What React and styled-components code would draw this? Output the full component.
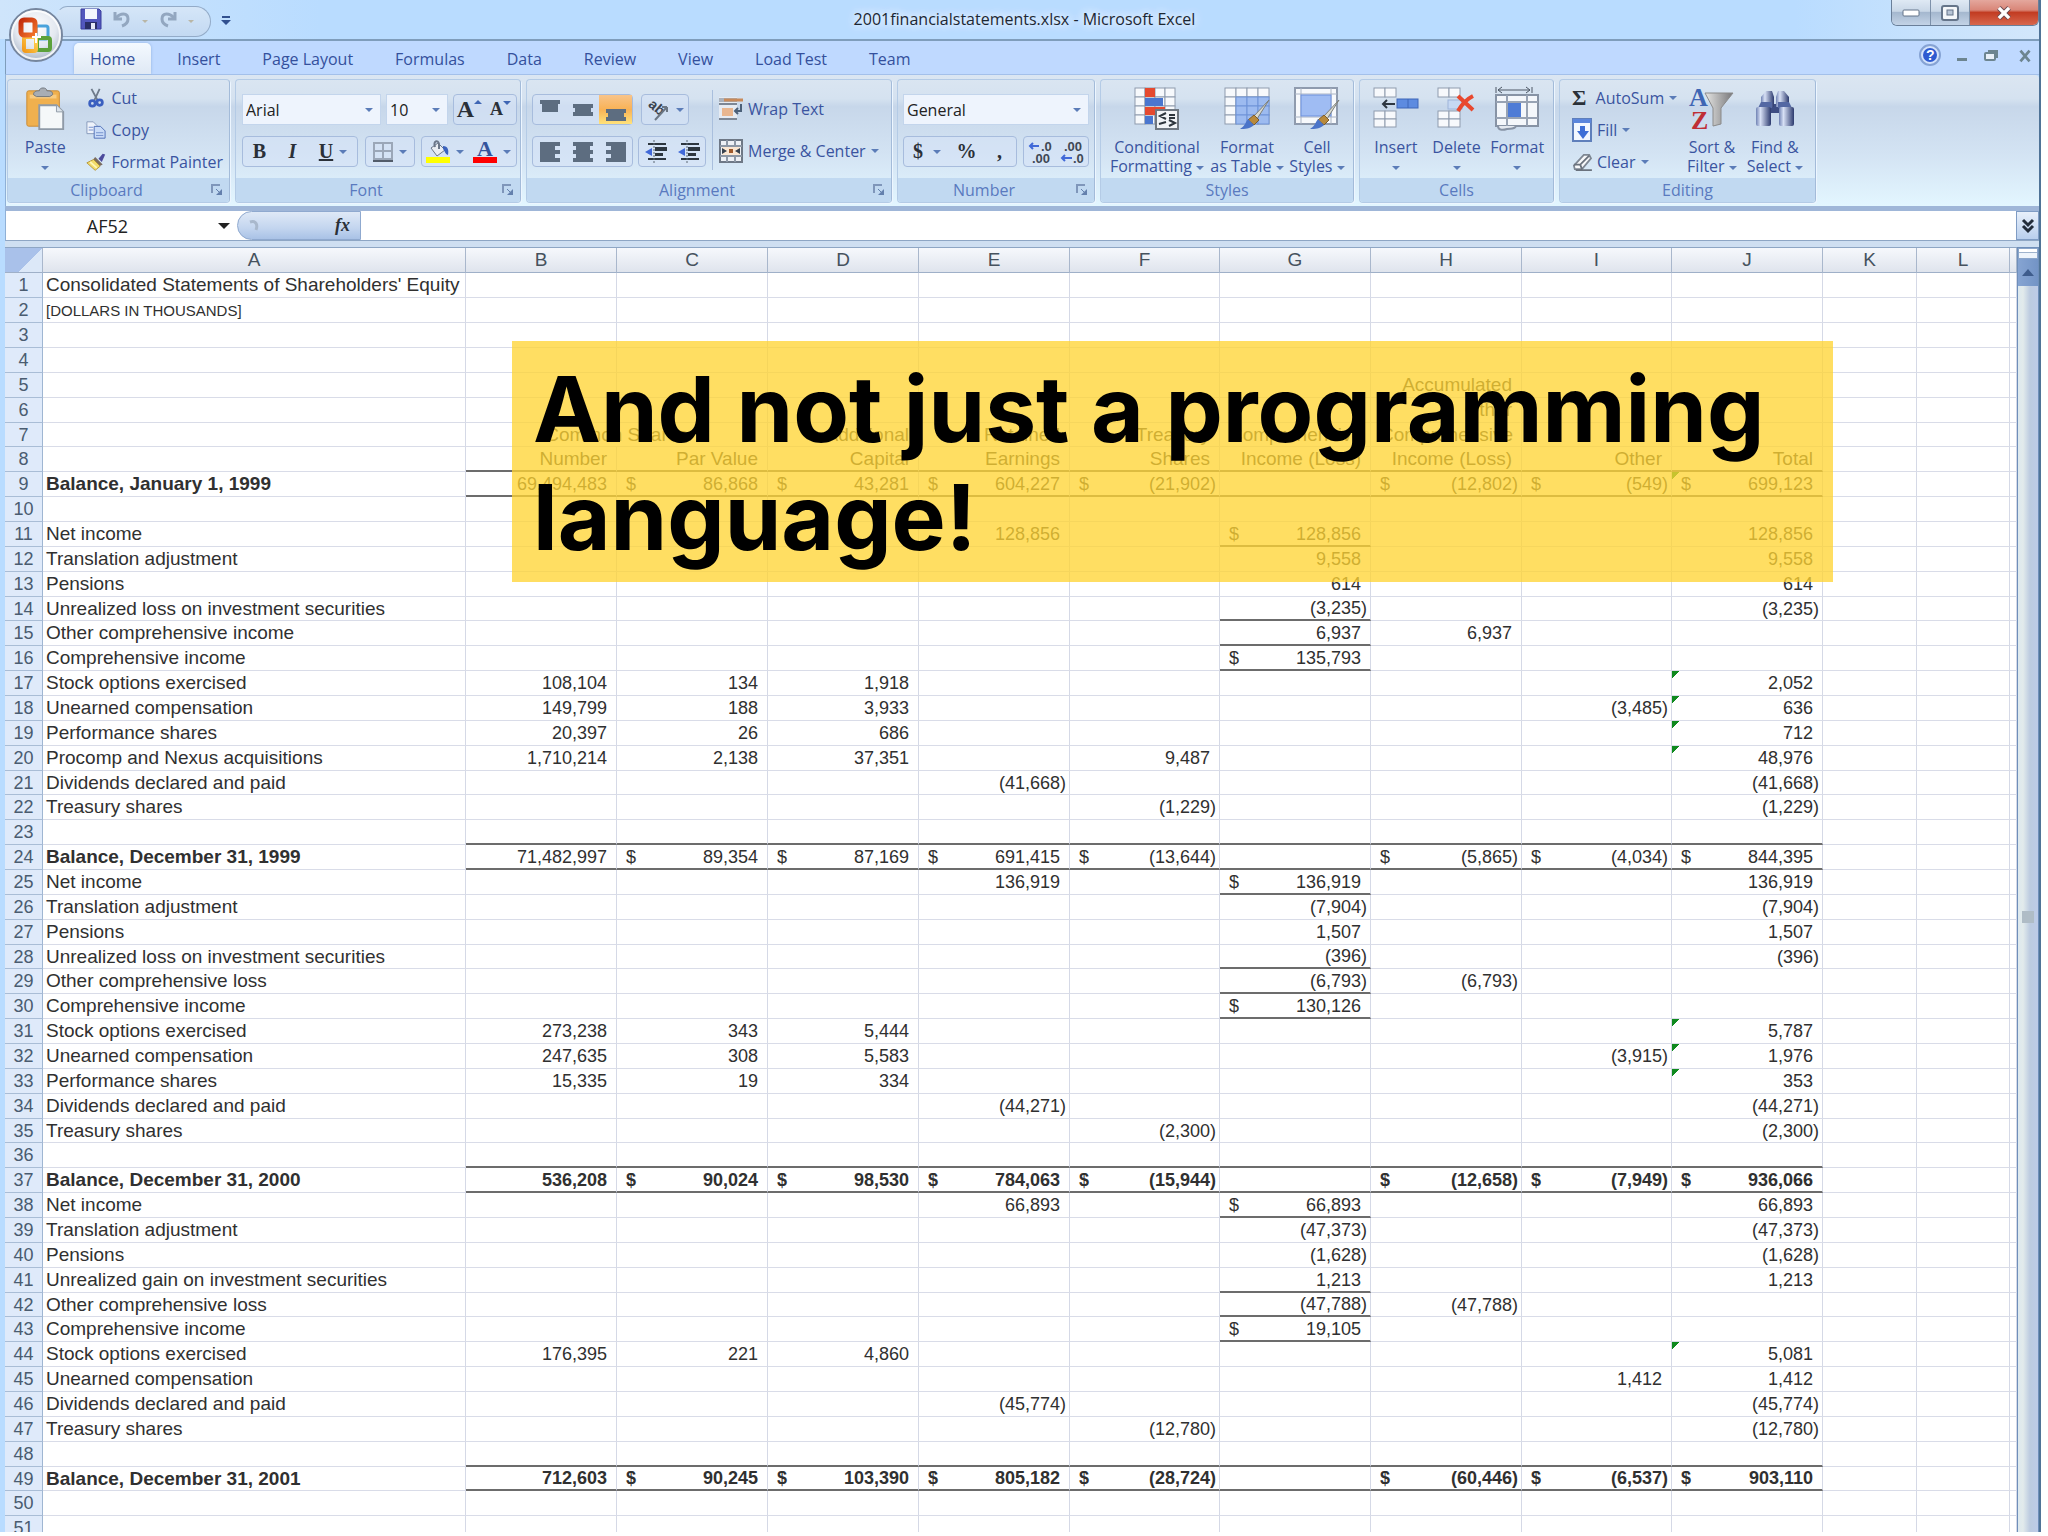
import styled, { createGlobalStyle, css } from 'styled-components';

const GlobalStyle = createGlobalStyle`
  * {
    box-sizing: border-box;
  }

  body {
    margin: 0;
    background: #fff;
    font-family: 'Open Sans', 'Noto Sans', sans-serif;
    font-size: 16px;
    color: #3a54a0;
  }

  button,
  input,
  select {
    font: inherit;
    color: inherit;
    margin: 0;
    padding: 0;
    border: 0;
    background: none;
    outline: none;
  }

  svg {
    flex: none;
    overflow: visible;
  }
`;

const Page = styled.main`
  position: relative;
  height: 100vh;
  padding: 0 7px 4px 0;
  overflow: hidden;
`;

const Window = styled.div`
  position: relative;
  display: flex;
  flex-direction: column;
  height: 100%;
  overflow: hidden;
  background: #b9dcff;
  border-right: 2px solid #4f7397;
`;

const TitleBar = styled.header`
  display: grid;
  grid-template-columns: 1fr auto 1fr;
  height: 39px;
  flex: none;
  background: linear-gradient(90deg, #cfe5fb 0, #b9dcff 320px, #b9dcff 88%, #d3e7fb 100%);
`;

const QuickAccess = styled.div`
  display: flex;
  align-items: center;
  gap: 10px;
  align-self: start;
  justify-self: start;
  height: 31px;
  margin: 6px 0 0 56px;
  padding: 0 16px 0 23px;
  border: 1px solid #93abc8;
  border-left-color: transparent;
  border-radius: 12px 16px 16px 4px;
  background: linear-gradient(#d5e6f8, #c3d9f2);
`;

const QuickTools = styled.div`
  display: flex;
  align-items: center;
  gap: 10px;
`;

const WindowTitle = styled.h1`
  margin: 0;
  padding-left: 10px;
  font-size: 16px;
  font-weight: 400;
  line-height: 39px;
  color: #1c2733;
  text-shadow: 0 0 8px #fff, 0 0 12px #fff;
`;

const WindowControls = styled.div`
  display: flex;
  align-self: start;
  justify-self: end;
  height: 26px;
  border: 1px solid #6a7f99;
  border-top: 0;
  border-radius: 0 0 6px 6px;
  overflow: hidden;
`;

const ControlButton = styled.button`
  display: flex;
  align-items: center;
  justify-content: center;
  width: ${({ $close }) => ($close ? 68 : 39)}px;
  border-right: ${({ $close }) => ($close ? 0 : 1)}px solid #7d91aa;
  background: ${({ $close }) =>
    $close
      ? 'linear-gradient(#e4a79d 0, #d98678 40%, #c23c22 50%, #d8674d 100%)'
      : 'linear-gradient(#dfe9f4 0, #c9d7e7 45%, #a5b8cf 50%, #c3d3e6 100%)'};
`;

const OfficeButton = styled.button`
  position: absolute;
  left: 8px;
  top: 7px;
  width: 56px;
  height: 56px;
  z-index: 2;
`;

const TabBar = styled.nav`
  display: flex;
  align-items: flex-end;
  flex: none;
  height: 36px;
  margin-left: 5px;
  padding-left: 63px;
  padding-right: 4px;
  border-top: 2px solid #7f9dbb;
  border-bottom: 1px solid #a3c0ea;
  border-left: 1px solid #7f9dbb;
  background: #bfd9ff;
`;

const Tab = styled.button`
  height: 31px;
  margin: 0 5px;
  padding: 1px 16px 0;
  border-radius: 5px 5px 0 0;
  line-height: 30px;
  color: #34509c;
  ${({ $active }) =>
    $active &&
    css`
      background: linear-gradient(#f4f9ff, #dfe9f5);
      box-shadow: 0 0 3px #8fb0dd;
    `}
`;

const TabTools = styled.div`
  display: flex;
  align-items: center;
  gap: 14px;
  height: 34px;
  margin-left: auto;
`;

const Ribbon = styled.section`
  display: flex;
  gap: 5px;
  flex: none;
  height: 131px;
  margin-left: 5px;
  padding: 4px 2px 3px 1px;
  border-left: 1px solid #8fb0d6;
  border-radius: 0 4px 0 0;
  background: linear-gradient(#dbe6f2 0, #d5e2f0 18%, #c7d7ea 24%, #d3e3f3 60%, #e3f6ff 100%);
`;

const GroupBox = styled.div`
  display: flex;
  flex-direction: column;
  width: ${({ $width }) => $width}px;
  height: 124px;
  border: 1px solid #b4cbe6;
  border-right-color: #a3bbd9;
  border-radius: 4px;
  box-shadow: 1px 1px 0 #edf6ff;
  overflow: hidden;
`;

const GroupBody = styled.div`
  display: flex;
  align-items: flex-start;
  flex: 1;
  padding: 0 ${({ $pad = 6 }) => $pad}px;
  gap: ${({ $gap = 0 }) => $gap}px;
`;

const GroupFooter = styled.div`
  display: flex;
  align-items: center;
  height: 24px;
  padding-right: ${({ $launcher }) => ($launcher ? 6 : 0)}px;
  background: #c1d9f1;
  color: #5a7abf;
  line-height: 24px;
`;

const GroupName = styled.span`
  flex: 1;
  padding-right: ${({ $launcher }) => ($launcher ? 6 : 0)}px;
  text-align: center;
`;

const BigButton = styled.button`
  display: flex;
  flex-direction: column;
  align-items: center;
  gap: 7px;
  width: ${({ $width }) => $width}px;
  padding-top: 7px;
  line-height: 19px;
  white-space: nowrap;

  span svg {
    vertical-align: middle;
  }
`;

const Stack = styled.div`
  display: flex;
  flex-direction: column;
  padding-top: ${({ $top = 2 }) => $top}px;
`;

const SmallButton = styled.button`
  display: flex;
  align-items: center;
  gap: 5px;
  height: ${({ $tall }) => ($tall ? 42 : 32)}px;
  white-space: nowrap;
`;

const ToolRows = styled.div`
  display: grid;
  gap: 11px;
  padding-top: 14px;
`;

const ToolRow = styled.div`
  display: flex;
  justify-content: space-between;
  gap: 5px;
`;

const ToolBox = styled.div`
  display: flex;
  height: 31px;
  border: 1px solid #a7bcdd;
  border-radius: 4px;
  background: rgba(214, 227, 246, 0.6);
`;

const Tool = styled.button`
  display: flex;
  align-items: center;
  justify-content: center;
  gap: ${({ $gap = 6 }) => $gap}px;
  width: ${({ $width = 33 }) => $width}px;
  color: #222;
  background: ${({ $on }) => ($on ? 'linear-gradient(#f8c48a, #f9b255 50%, #ffe27a)' : 'none')};
`;

const Glyph = styled.span`
  font-family: 'Liberation Serif', serif;
  font-size: ${({ $size = 20 }) => $size}px;
  font-weight: 700;
  font-style: ${({ $italic }) => ($italic ? 'italic' : 'normal')};
  text-decoration: ${({ $under }) => ($under ? 'underline' : 'none')};
  color: #2a3038;
`;

const SelectBox = styled.label`
  display: flex;
  align-items: center;
  width: ${({ $width }) => $width}px;
  height: 31px;
  padding: 0 7px 0 3px;
  border: 1px solid #c3d5ec;
  background: #eef4fd;
  color: #222;

  select {
    flex: 1;
    min-width: 0;
    appearance: none;
  }
`;

const Divider = styled.div`
  width: 1px;
  height: 80px;
  margin-top: 10px;
  background: #a9bfdd;
`;

const FormulaBar = styled.div`
  display: flex;
  flex: none;
  height: 35px;
  margin-left: 5px;
  border-top: 5px solid #9fb6d8;
  border-bottom: 1px solid #8ea6c4;
  border-left: 1px solid #8fb0d6;
  background: #fff;
`;

const NameBox = styled.label`
  display: flex;
  align-items: center;
  justify-content: space-between;
  width: 226px;
  padding-right: 2px;

  input {
    width: 203px;
    text-align: center;
    color: #222;
    font-size: 18px;
  }
`;

const FxButton = styled.button`
  display: flex;
  align-items: center;
  justify-content: space-between;
  width: 124px;
  margin-left: 5px;
  padding: 0 10px;
  border: 1px solid #8fa9cf;
  border-radius: 16px 0 0 16px;
  background: linear-gradient(#dfe9f7, #c3d5ef 60%, #a9c2e6);
`;

const FormulaInput = styled.input`
  flex: 1;
  background: #fff;
`;

const ExpandButton = styled.button`
  display: flex;
  align-items: center;
  justify-content: center;
  width: 23px;
  border: 1px solid #7f9cc4;
  background: linear-gradient(#e8f0fb, #b9cfed);
`;

const Workbook = styled.div`
  display: flex;
  flex: 1;
  min-height: 0;
  margin-left: 5px;
  padding-top: 6px;
  background: #cfdff1;
`;

const SheetArea = styled.div`
  flex: 1;
  min-width: 0;
  overflow: hidden;
  border-top: 1px solid #8ea6c4;
  background: #fff;
`;

const Sheet = styled.table`
  width: 100%;
  table-layout: fixed;
  border-collapse: separate;
  border-spacing: 0;
  font-family: 'Liberation Sans', Arial, sans-serif;
  font-size: 18px;
  line-height: 22px;
  color: #303030;

  th,
  td {
    padding: 0;
    white-space: nowrap;
  }

  tbody tr {
    height: 25px;
  }

  tbody tr:nth-child(7n) {
    height: 24px;
  }
`;

const ColumnHead = styled.th`
  height: 25px;
  border-right: 1px solid #a9b7cc;
  border-bottom: 1px solid #9fb0c8;
  background: linear-gradient(#f6f8fc, #dfe4ed);
  font-size: 19px;
  font-weight: 400;
  color: #46525e;
`;

const Corner = styled(ColumnHead)`
  background: linear-gradient(135deg, #a9c1ea 0 62%, #dce8f8 62%);
`;

const RowHead = styled.th`
  border-right: 1px solid #9fb6d2;
  border-bottom: 1px solid #a9bdd6;
  background: #dfeafa;
  font-weight: 400;
  color: #4a5c70;
`;

const Cell = styled.td`
  border-right: 1px solid #d5d9e6;
  border-bottom: 1px solid #d9dce8;
  text-align: ${({ $align = 'right' }) => $align};
  font-size: ${({ $caption }) => ($caption ? 19 : 18)}px;
  font-weight: ${({ $bold }) => ($bold ? 700 : 400)};
  ${({ $rule }) =>
    $rule &&
    css`
      border-bottom: 2px solid #6c6c6c;
    `}
  ${({ $flag }) =>
    $flag &&
    css`
      background: linear-gradient(135deg, #0f8a1e 0 5px, transparent 5px) no-repeat;
    `}
`;

const Label = styled.span`
  padding-left: 3px;
  font-size: ${({ $small }) => ($small ? 15 : 19)}px;
`;

const Amount = styled.div`
  display: flex;
  justify-content: space-between;
  padding: 0 ${({ $negative }) => ($negative ? 3 : 9)}px 0 9px;
`;

const ScrollBar = styled.div`
  display: flex;
  flex-direction: column;
  width: 22px;
  border: 1px solid #6f8fba;
  border-bottom: 0;
  background: #7f9fce;
`;

const SplitHandle = styled.div`
  height: 11px;
  border: 1px solid #8aa5ca;
  background: linear-gradient(#fff 0 3px, #9fb3cd 3px 4px, #eef4fb 4px);
`;

const ScrollArrow = styled.button`
  display: flex;
  align-items: center;
  justify-content: center;
  height: 27px;
  background: linear-gradient(90deg, #86a4d2, #7394c6);
`;

const Thumb = styled.div`
  display: flex;
  flex: 1;
  align-items: center;
  justify-content: center;
  padding-top: 16px;
  background: linear-gradient(90deg, #dde9ee 0, #e2ebec 25%, #bccbe0 60%, #bdcbe8 100%);
`;

const Grip = styled.span`
  width: 12px;
  height: 12px;
  background: #afbcc6;
`;

const Banner = styled.p`
  position: absolute;
  left: 25%;
  top: 341px;
  z-index: 3;
  width: 1321px;
  max-width: 75%;
  margin: 0;
  padding: 14px 20px 11px 21px;
  background: rgba(255, 212, 51, 0.77);
  font-family: 'Century Gothic', Inter, sans-serif;
  font-size: 91px;
  font-weight: 700;
  line-height: 108px;
  color: #000;
`;

const Caret = ({ color = '#5b7cb8', size = 8 }) => (
  <svg width={size} height={size / 2} viewBox="0 0 8 4" aria-hidden="true">
    <path d="M0 0h8L4 4z" fill={color} />
  </svg>
);

const SizeMark = ({ down }) => (
  <svg width="8" height="22" viewBox="0 0 8 22" aria-hidden="true">
    <path d={down ? 'M0 2h8L4 6z' : 'M0 5h8L4 1z'} fill="#3f66b4" />
  </svg>
);

const OfficeLogo = () => (
  <svg width="56" height="56" viewBox="0 0 56 56" aria-hidden="true">
    <defs>
      <radialGradient id="orb" cx="50%" cy="35%" r="65%">
        <stop offset="0" stopColor="#fff" />
        <stop offset="0.6" stopColor="#e3e8f0" />
        <stop offset="1" stopColor="#a9b5c6" />
      </radialGradient>
      <linearGradient id="orbRed" x1="0" y1="0" x2="1" y2="1">
        <stop offset="0" stopColor="#c32c0c" />
        <stop offset="1" stopColor="#f2762a" />
      </linearGradient>
      <linearGradient id="orbGold" x1="0" y1="1" x2="1" y2="0">
        <stop offset="0" stopColor="#f39a1c" />
        <stop offset="1" stopColor="#ffd85a" />
      </linearGradient>
    </defs>
    <circle cx="28" cy="28" r="26" fill="url(#orb)" stroke="#76869e" strokeWidth="2" />
    <circle cx="28" cy="28" r="24" fill="none" stroke="#fff" strokeOpacity="0.8" strokeWidth="2" />
    <rect x="28" y="19" width="12" height="13" rx="2" fill="none" stroke="#4aa3dc" strokeWidth="3" />
    <rect x="29" y="31" width="13" height="12" rx="2" fill="none" stroke="#5ba13a" strokeWidth="4" />
    <rect x="16" y="30" width="12" height="14" rx="2" fill="none" stroke="url(#orbGold)" strokeWidth="4" />
    <rect x="13" y="13" width="14" height="15" rx="3" fill="none" stroke="url(#orbRed)" strokeWidth="5" />
    <path d="M28 26v10M24 30h9" stroke="#fff" strokeWidth="2" />
  </svg>
);

const SaveIcon = () => (
  <svg width="22" height="22" viewBox="0 0 22 22" aria-hidden="true">
    <path d="M1 1h18l2 2v18H1z" fill="#5257bd" stroke="#3b3f9c" />
    <rect x="5" y="1" width="12" height="10" fill="#f2f5fd" />
    <rect x="5" y="14" width="12" height="7" fill="#2a2e66" />
    <rect x="11" y="15" width="4" height="6" fill="#e6e9f5" />
  </svg>
);

const UndoIcon = ({ flip }) => (
  <svg width="20" height="20" viewBox="0 0 20 20" aria-hidden="true">
    <g transform={flip ? 'matrix(-1 0 0 1 20 0)' : undefined} fill="none" stroke="#93a7c0" strokeWidth="3">
      <path d="M3 3v7h7" />
      <path d="M4 9c4-5 12-6 12 1 0 4-3 6-6 7" />
    </g>
  </svg>
);

const QuickMenuIcon = () => (
  <svg width="10" height="10" viewBox="0 0 10 10" aria-hidden="true">
    <path d="M1 0h8v2H1zM0 4h10L5 9z" fill="#31508f" />
  </svg>
);

const PasteIcon = () => (
  <svg width="42" height="44" viewBox="0 0 42 46" aria-hidden="true">
    <rect x="2" y="4" width="34" height="37" rx="2" fill="#f0b04e" stroke="#c98a34" />
    <rect x="5" y="8" width="28" height="4" fill="#f8cb80" />
    <path d="M9 8c0-4 4-4 6-4 0-4 8-4 8 0 3 0 6 0 6 4l-3 2H12z" fill="#a8adb3" stroke="#6d737b" />
    <path d="M15 19h18l7 7v18H15z" fill="#f5f8f9" stroke="#8f9aa7" strokeWidth="2" />
    <path d="M33 19v7h7" fill="#dde4ea" stroke="#8f9aa7" />
  </svg>
);

const CutIcon = () => (
  <svg width="20" height="22" viewBox="0 0 22 22" fill="none" aria-hidden="true">
    <path d="M6 1l7 13M15 1L9 14" stroke="#6f7b8b" strokeWidth="2" />
    <circle cx="7" cy="17" r="3" stroke="#3a5fc0" strokeWidth="3" />
    <circle cx="15" cy="16" r="3" stroke="#3a5fc0" strokeWidth="3" />
  </svg>
);

const CopyIcon = () => (
  <svg width="20" height="22" viewBox="0 0 22 22" aria-hidden="true">
    <path d="M1 2h7l4 4v9H1z" fill="#eef3fb" stroke="#8396b8" />
    <path d="M9 7h7l5 5v8H9z" fill="#c9dbf7" stroke="#4b6bb5" />
    <path d="M11 14h8M11 17h8M3 8h5M3 11h5" stroke="#6f8cc9" />
  </svg>
);

const PainterIcon = () => (
  <svg width="20" height="20" viewBox="0 0 24 22" aria-hidden="true">
    <path d="M15 7l5-6 3 1-4 9z" fill="#4c4a9c" />
    <path d="M11 5l9 9-4 2-8-7z" fill="#7a6c60" />
    <path d="M9 8l8 8-6 5L1 12z" fill="#f2dc6a" stroke="#b08f30" />
    <path d="M5 11l8 7" stroke="#fff6b8" strokeWidth="2" />
  </svg>
);

const BordersIcon = () => (
  <svg width="20" height="20" viewBox="0 0 20 20" fill="none" aria-hidden="true">
    <path d="M1 1h18v16H1zM10 1v16M1 9h18" stroke="#9ba7b8" strokeWidth="2" />
    <path d="M0 19h20" stroke="#525c6a" strokeWidth="2" />
  </svg>
);

const FillColorIcon = () => (
  <svg width="24" height="24" viewBox="0 0 24 24" aria-hidden="true">
    <path d="M5 8l7-5 7 7-8 6z" fill="#e9edf3" stroke="#6b7789" />
    <path d="M9 7c-2-6 3-8 4-3v5" fill="none" stroke="#6b7789" strokeWidth="2" />
    <path d="M17 6c5 0 6 4 5 9-3-1-3-4-5-6z" fill="#3c63bd" />
    <rect x="0" y="17" width="24" height="6" fill="#ffff00" />
  </svg>
);

const AlignIcon = ({ widths, top = 4, side = 'center' }) => (
  <svg width="20" height="22" viewBox="0 0 20 22" aria-hidden="true">
    {widths.map((w, i) => {
      const x = side === 'left' ? 0 : side === 'right' ? 20 - w : (20 - w) / 2;
      return <rect key={i} x={x} y={top + i * 4} width={w} height="4" fill="#5d6d80" />;
    })}
  </svg>
);

const OrientationIcon = () => (
  <svg width="24" height="24" viewBox="0 0 24 24" aria-hidden="true">
    <text x="1" y="11" fontSize="14" fontWeight="700" fontFamily="Liberation Sans, sans-serif" fill="#39424e" transform="rotate(42 6 10)">
      ab
    </text>
    <path d="M9 22L21 9M21 9v5M21 9h-5" stroke="#6b7684" strokeWidth="2" fill="none" />
  </svg>
);

const IndentIcon = () => (
  <svg width="24" height="24" viewBox="0 0 24 24" aria-hidden="true">
    <path d="M4 3h18v2H4zM11 7h12v4H11zM11 13h8v3h-8zM4 18h18v2H4z" fill="#2d363f" />
    <path d="M10 0v24" stroke="#5a6673" strokeDasharray="2 1" />
    <path d="M8 8L1 12l7 4z" fill="#4169d8" />
  </svg>
);

const WrapIcon = () => (
  <svg width="24" height="24" viewBox="0 0 24 24" aria-hidden="true">
    <rect x="0" y="0" width="18" height="22" fill="#e6ebf2" />
    <path d="M0 1h18v4H0z" fill="#aab2bd" />
    <path d="M5 3h19" stroke="#c88a5a" strokeWidth="3" />
    <path d="M0 7h18M0 22h18" stroke="#7d8795" strokeWidth="2" />
    <rect x="3" y="11" width="11" height="8" fill="#e9b68f" />
    <path d="M22 7v7h-5M19 11l-3 3 3 3" stroke="#4b6079" strokeWidth="2" fill="none" />
  </svg>
);

const MergeIcon = () => (
  <svg width="24" height="24" viewBox="0 0 24 24" aria-hidden="true">
    <rect x="1" y="1" width="22" height="22" fill="#eef1f6" stroke="#6e7886" strokeWidth="2" />
    <path d="M8 1v6M16 1v6M8 17v6M16 17v6M1 7h22M1 17h22" stroke="#8e98a6" strokeWidth="2" />
    <rect x="3" y="8" width="18" height="8" fill="#fbe7d3" />
    <path d="M3 9l5 3-5 3zM21 9l-5 3 5 3z" fill="#38424e" />
    <rect x="10" y="10" width="4" height="4" fill="#a05a2c" />
  </svg>
);

const DecimalIcon = ({ flip }) => (
  <svg width="24" height="24" viewBox="0 0 24 24" aria-hidden="true">
    <g fontFamily="Liberation Sans, sans-serif" fontSize="13" fontWeight="700" fill="#3f4854">
      <text x={flip ? 4 : 13} y="11">{flip ? '.00' : '.0'}</text>
      <text x={flip ? 13 : 4} y="23">{flip ? '.0' : '.00'}</text>
    </g>
    <path d={flip ? 'M12 18H2M5 15l-3 3 3 3' : 'M11 6H2M5 3L2 6l3 3'} stroke="#4169d8" strokeWidth="2" fill="none" />
  </svg>
);

const GridBase = ({ x = 1, y = 1, cols = 4, rows = 4, w = 10, h = 9 }) =>
  Array.from({ length: cols * rows }, (_, i) => (
    <rect key={i} x={x + (i % cols) * w} y={y + Math.floor(i / cols) * h} width={w} height={h} fill="#f7f9fc" stroke="#8f9bae" />
  ));

const Brush = () => (
  <g>
    <path d="M45 13L30 29l3 3z" fill="#d8dad2" stroke="#7c7f7a" />
    <path d="M30 28l5 5-5 5-6-5z" fill="#b98a3c" stroke="#7c5c28" />
    <path d="M24 32l6 6c-4 4-9 4-14 4 5-3 5-6 8-10z" fill="#4b74c9" />
  </g>
);

const ConditionalIcon = () => (
  <svg width="46" height="44" viewBox="0 0 46 44" aria-hidden="true">
    <GridBase />
    <rect x="11" y="1" width="10" height="9" fill="#e5492f" />
    <rect x="11" y="11" width="18" height="8" fill="#4a76cf" />
    <rect x="11" y="20" width="20" height="8" fill="#e5492f" />
    <rect x="11" y="29" width="8" height="8" fill="#4a76cf" />
    <rect x="22" y="23" width="22" height="19" fill="#f1f3f6" stroke="#6f7781" strokeWidth="2" />
    <path d="M32 26l-6 3 6 3M25 37l7-2M35 28h6M35 31h6M35 39l6-3-6-3" stroke="#2e353d" strokeWidth="2" fill="none" />
  </svg>
);

const TableIcon = () => (
  <svg width="46" height="44" viewBox="0 0 46 44" aria-hidden="true">
    <GridBase w={11} />
    <g stroke="#6f93d8" fill="#9dbbf0">
      <rect x="12" y="10" width="11" height="9" />
      <rect x="23" y="10" width="11" height="9" />
      <rect x="34" y="10" width="11" height="9" />
      <rect x="12" y="19" width="11" height="9" />
      <rect x="23" y="19" width="11" height="9" />
      <rect x="34" y="19" width="11" height="9" />
      <rect x="12" y="28" width="11" height="9" />
      <rect x="23" y="28" width="11" height="9" />
      <rect x="34" y="28" width="11" height="9" />
    </g>
    <Brush />
  </svg>
);

const CellStyleIcon = () => (
  <svg width="46" height="44" viewBox="0 0 46 44" aria-hidden="true">
    <rect x="1" y="1" width="42" height="36" fill="#f7f9fc" stroke="#8f9bae" strokeWidth="2" />
    <path d="M7 1v36M37 1v36M1 7h42M1 30h42" stroke="#aab4c4" />
    <rect x="7" y="8" width="30" height="21" fill="#9fbcf3" stroke="#6c90dc" />
    <Brush />
  </svg>
);

const InsertIcon = () => (
  <svg width="46" height="44" viewBox="0 0 46 44" aria-hidden="true">
    <GridBase cols={2} rows={1} w={11} />
    <GridBase y={24} cols={2} rows={2} w={11} h={8} />
    <rect x="24" y="12" width="21" height="9" fill="#5d8be0" stroke="#3f66b8" />
    <path d="M35 12v9" stroke="#3f66b8" />
    <path d="M22 17H10M14 13l-4 4 4 4" stroke="#2d3640" strokeWidth="2" fill="none" />
  </svg>
);

const DeleteIcon = () => (
  <svg width="40" height="44" viewBox="0 0 40 44" aria-hidden="true">
    <GridBase cols={2} rows={1} w={11} />
    <GridBase y={24} cols={2} rows={2} w={11} h={8} />
    <rect x="11" y="13" width="14" height="9" fill="#c6d8f3" stroke="#9db4da" />
    <path d="M21 9l15 14M36 9c-6 3-11 8-15 15" stroke="#e8482e" strokeWidth="4" fill="none" />
  </svg>
);

const FormatIcon = () => (
  <svg width="46" height="44" viewBox="0 0 46 44" aria-hidden="true">
    <path d="M2 0v6M38 0v6M4 3h32M8 0L4 3l4 3M32 0l4 3-4 3" stroke="#4c5664" fill="none" />
    <rect x="2" y="8" width="42" height="31" fill="#f4f7fb" stroke="#8793a5" strokeWidth="2" />
    <path d="M13 8v31M33 8v31M2 15h42M2 31h42" stroke="#98a3b4" strokeWidth="2" />
    <rect x="14" y="16" width="13" height="14" fill="#4f7cd6" />
    <path d="M4 39c0 5 6 4 9 3s7 1 9-3" fill="#e4e9f0" stroke="#8793a5" strokeWidth="2" />
  </svg>
);

const FillIcon = () => (
  <svg width="20" height="24" viewBox="0 0 20 24" aria-hidden="true">
    <rect x="1" y="1" width="18" height="22" fill="#f4f8ff" stroke="#5f7fbb" strokeWidth="2" />
    <rect x="1" y="1" width="18" height="4" fill="#5c86dc" />
    <path d="M8 8h5v5h4l-6 8-6-8h3z" fill="#3f6fd6" />
  </svg>
);

const ClearIcon = () => (
  <svg width="20" height="18" viewBox="0 0 22 20" aria-hidden="true">
    <path d="M2 14L13 2h6l2 4-10 12H3z" fill="#f7f8fa" stroke="#7e8793" strokeWidth="2" />
    <path d="M11 18l-2-5 10-10M2 13h7M4 19h18" stroke="#6a727d" strokeWidth="2" fill="none" />
  </svg>
);

const SortIcon = () => (
  <svg width="46" height="44" viewBox="0 0 46 44" aria-hidden="true">
    <defs>
      <linearGradient id="funnel">
        <stop offset="0" stopColor="#e6e6e4" />
        <stop offset="1" stopColor="#77777a" />
      </linearGradient>
    </defs>
    <path d="M16 6h28L32 21v16l-8 2V21z" fill="url(#funnel)" stroke="#8a8a8a" />
    <g fontFamily="Liberation Serif, serif" fontSize="26" fontWeight="700">
      <text x="0" y="19" fill="#3f66b4">A</text>
      <text x="2" y="42" fill="#bf2f36">Z</text>
    </g>
  </svg>
);

const FindIcon = () => (
  <svg width="42" height="44" viewBox="0 0 42 44" aria-hidden="true">
    <defs>
      <linearGradient id="barrel">
        <stop offset="0" stopColor="#7183b4" />
        <stop offset="0.3" stopColor="#d7e0f5" />
        <stop offset="1" stopColor="#2c3a6e" />
      </linearGradient>
    </defs>
    <rect x="16" y="17" width="10" height="9" fill="#3d4d83" />
    <path d="M12 4h6l2 6v10H7V10z" fill="url(#barrel)" />
    <path d="M24 4h6l5 6v10H22V10z" fill="url(#barrel)" />
    <path d="M7 15h11v6H4z" fill="#5468a3" />
    <path d="M24 15h11l3 6H24z" fill="#5468a3" />
    <rect x="2" y="20" width="15" height="19" rx="2" fill="url(#barrel)" />
    <rect x="25" y="20" width="15" height="19" rx="2" fill="url(#barrel)" />
  </svg>
);

const LauncherIcon = () => (
  <svg width="12" height="12" viewBox="0 0 12 12" aria-hidden="true">
    <path d="M1 9V1h8" stroke="#7f96ba" strokeWidth="2" fill="none" />
    <path d="M11 5v6H5z" fill="#6480ad" />
    <path d="M5 5l4 4" stroke="#6480ad" />
  </svg>
);

const HelpIcon = () => (
  <svg width="22" height="22" viewBox="0 0 22 22" aria-hidden="true">
    <circle cx="11" cy="11" r="10" fill="#d4e3fb" stroke="#86a3d4" strokeWidth="2" />
    <circle cx="11" cy="11" r="7" fill="#2f5bd0" />
    <text x="7" y="16" fontSize="14" fontWeight="700" fontFamily="Liberation Sans, sans-serif" fill="#fff">?</text>
  </svg>
);

const Group = ({ name, width, pad, gap, launcher, children }) => (
  <GroupBox $width={width} role="group" aria-label={name}>
    <GroupBody $pad={pad} $gap={gap}>{children}</GroupBody>
    <GroupFooter $launcher={launcher}>
      <GroupName $launcher={launcher}>{name}</GroupName>
      {launcher && (
        <button aria-label={`${name} options`}>
          <LauncherIcon />
        </button>
      )}
    </GroupFooter>
  </GroupBox>
);

const Big = ({ icon, lines, width }) => (
  <BigButton $width={width}>
    {icon}
    <span>
      {lines[0]}
      <br />
      {lines[1] && `${lines[1]} `}
      <Caret />
    </span>
  </BigButton>
);

const tabs = ['Home', 'Insert', 'Page Layout', 'Formulas', 'Data', 'Review', 'View', 'Load Test', 'Team'];

const columns = [
  ['A', 423],
  ['B', 151],
  ['C', 151],
  ['D', 151],
  ['E', 151],
  ['F', 150],
  ['G', 151],
  ['H', 151],
  ['I', 150],
  ['J', 151],
  ['K', 94],
  ['L', 93],
];

// A value starting with "$" shows its currency sign at the left of the cell.
const rows = {
  1: { A: "Consolidated Statements of Shareholders' Equity" },
  2: { A: '[DOLLARS IN THOUSANDS]', small: true },
  5: { H: 'Accumulated', caption: true },
  6: { H: 'Other', caption: true },
  7: { B: 'Common Shares', span: true, caption: true, D: 'Additional', E: 'Retained', F: 'Treasury', G: 'Comprehensive', H: 'Comprehensive' },
  8: { B: 'Number', C: 'Par Value', D: 'Capital', E: 'Earnings', F: 'Shares', G: 'Income (Loss)', H: 'Income (Loss)', I: 'Other', J: 'Total', rule: true, caption: true },
  9: { A: 'Balance, January 1, 1999', B: '69,494,483', C: '$86,868', D: '$43,281', E: '$604,227', F: '$(21,902)', H: '$(12,802)', I: '$(549)', J: '$699,123', head: true, rule: true, flag: true },
  11: { A: 'Net income', E: '128,856', G: '$128,856', J: '128,856', ruleG: true },
  12: { A: 'Translation adjustment', G: '9,558', J: '9,558' },
  13: { A: 'Pensions', G: '614', J: '614' },
  14: { A: 'Unrealized loss on investment securities', G: '(3,235)', J: '(3,235)', ruleG: true },
  15: { A: 'Other comprehensive income', G: '6,937', H: '6,937', ruleG: true },
  16: { A: 'Comprehensive income', G: '$135,793', ruleG: true },
  17: { A: 'Stock options exercised', B: '108,104', C: '134', D: '1,918', J: '2,052', flag: true },
  18: { A: 'Unearned compensation', B: '149,799', C: '188', D: '3,933', I: '(3,485)', J: '636', flag: true },
  19: { A: 'Performance shares', B: '20,397', C: '26', D: '686', J: '712', flag: true },
  20: { A: 'Procomp and Nexus acquisitions', B: '1,710,214', C: '2,138', D: '37,351', F: '9,487', J: '48,976', flag: true },
  21: { A: 'Dividends declared and paid', E: '(41,668)', J: '(41,668)' },
  22: { A: 'Treasury shares', F: '(1,229)', J: '(1,229)' },
  23: { rule: true },
  24: { A: 'Balance, December 31, 1999', B: '71,482,997', C: '$89,354', D: '$87,169', E: '$691,415', F: '$(13,644)', H: '$(5,865)', I: '$(4,034)', J: '$844,395', head: true, rule: true },
  25: { A: 'Net income', E: '136,919', G: '$136,919', J: '136,919', ruleG: true },
  26: { A: 'Translation adjustment', G: '(7,904)', J: '(7,904)' },
  27: { A: 'Pensions', G: '1,507', J: '1,507' },
  28: { A: 'Unrealized loss on investment securities', G: '(396)', J: '(396)', ruleG: true },
  29: { A: 'Other comprehensive loss', G: '(6,793)', H: '(6,793)', ruleG: true },
  30: { A: 'Comprehensive income', G: '$130,126', ruleG: true },
  31: { A: 'Stock options exercised', B: '273,238', C: '343', D: '5,444', J: '5,787', flag: true },
  32: { A: 'Unearned compensation', B: '247,635', C: '308', D: '5,583', I: '(3,915)', J: '1,976', flag: true },
  33: { A: 'Performance shares', B: '15,335', C: '19', D: '334', J: '353', flag: true },
  34: { A: 'Dividends declared and paid', E: '(44,271)', J: '(44,271)' },
  35: { A: 'Treasury shares', F: '(2,300)', J: '(2,300)' },
  36: { rule: true },
  37: { A: 'Balance, December 31, 2000', B: '536,208', C: '$90,024', D: '$98,530', E: '$784,063', F: '$(15,944)', H: '$(12,658)', I: '$(7,949)', J: '$936,066', head: true, bold: true, rule: true },
  38: { A: 'Net income', E: '66,893', G: '$66,893', J: '66,893', ruleG: true },
  39: { A: 'Translation adjustment', G: '(47,373)', J: '(47,373)' },
  40: { A: 'Pensions', G: '(1,628)', J: '(1,628)' },
  41: { A: 'Unrealized gain on investment securities', G: '1,213', J: '1,213', ruleG: true },
  42: { A: 'Other comprehensive loss', G: '(47,788)', H: '(47,788)', ruleG: true },
  43: { A: 'Comprehensive income', G: '$19,105', ruleG: true },
  44: { A: 'Stock options exercised', B: '176,395', C: '221', D: '4,860', J: '5,081', flag: true },
  45: { A: 'Unearned compensation', I: '1,412', J: '1,412' },
  46: { A: 'Dividends declared and paid', E: '(45,774)', J: '(45,774)' },
  47: { A: 'Treasury shares', F: '(12,780)', J: '(12,780)' },
  48: { rule: true },
  49: { A: 'Balance, December 31, 2001', B: '712,603', C: '$90,245', D: '$103,390', E: '$805,182', F: '$(28,724)', H: '$(60,446)', I: '$(6,537)', J: '$903,110', head: true, bold: true, rule: true },
};

const ruled = 'BCDEFGHIJ';

const SheetCell = ({ col, row }) => {
  const value = row[col];
  if (col === 'A') {
    return (
      <Cell $align="left" $bold={row.head}>
        {value && <Label $small={row.small}>{value}</Label>}
      </Cell>
    );
  }
  if (row.span && col === 'C') return null;
  if (row.span && col === 'B') {
    return (
      <Cell colSpan={2} $align="center" $caption>
        {value}
      </Cell>
    );
  }
  const money = value && value.startsWith('$');
  const text = money ? value.slice(1) : value;
  return (
    <Cell
      $bold={row.bold}
      $caption={row.caption}
      $rule={(row.rule && ruled.includes(col)) || (row.ruleG && col === 'G')}
      $flag={row.flag && col === 'J'}
    >
      {value && (
        <Amount $negative={text.startsWith('(')}>
          <span>{money && '$'}</span>
          <span>{text}</span>
        </Amount>
      )}
    </Cell>
  );
};

const App = () => (
  <Page>
    <GlobalStyle />
    <Window>
      <OfficeButton aria-label="Office menu">
        <OfficeLogo />
      </OfficeButton>

      <TitleBar>
        <QuickTools>
          <QuickAccess>
            <button aria-label="Save"><SaveIcon /></button>
            <button aria-label="Undo"><UndoIcon /></button>
            <Caret color="#b9b6a6" size={6} />
            <button aria-label="Redo"><UndoIcon flip /></button>
            <Caret color="#b9b6a6" size={6} />
          </QuickAccess>
          <button aria-label="Customize toolbar"><QuickMenuIcon /></button>
        </QuickTools>
        <WindowTitle>2001financialstatements.xlsx - Microsoft Excel</WindowTitle>
        <WindowControls>
          <ControlButton aria-label="Minimize">
            <svg width="18" height="8" viewBox="0 0 18 8"><rect x="1" y="1" width="16" height="6" rx="1" fill="#fff" stroke="#65758a" /></svg>
          </ControlButton>
          <ControlButton aria-label="Maximize">
            <svg width="18" height="16" viewBox="0 0 18 16"><rect x="1" y="1" width="16" height="14" rx="2" fill="#f4f7fa" stroke="#65758a" strokeWidth="2" /><rect x="6" y="5" width="6" height="5" fill="#b8c5d6" stroke="#65758a" /></svg>
          </ControlButton>
          <ControlButton $close aria-label="Close">
            <svg width="16" height="12" viewBox="0 0 16 14"><path d="M2 1l12 12M14 1L2 13" stroke="#6c4a50" strokeWidth="6" /><path d="M2 1l12 12M14 1L2 13" stroke="#fff" strokeWidth="4" /></svg>
          </ControlButton>
        </WindowControls>
      </TitleBar>

      <TabBar>
        {tabs.map((tab) => (
          <Tab key={tab} $active={tab === 'Home'}>{tab}</Tab>
        ))}
        <TabTools>
          <button aria-label="Help"><HelpIcon /></button>
          <button aria-label="Minimize workbook">
            <svg width="14" height="14" viewBox="0 0 14 14"><rect x="2" y="9" width="10" height="3" fill="#6d8590" /></svg>
          </button>
          <button aria-label="Restore workbook">
            <svg width="18" height="14" viewBox="0 0 18 14"><path d="M5 1h10v8H5z" fill="#6d8590" /><rect x="2" y="4" width="10" height="7" rx="1" fill="#e9f0f8" stroke="#6d8590" strokeWidth="2" /></svg>
          </button>
          <button aria-label="Close workbook">
            <svg width="20" height="14" viewBox="0 0 22 14"><path d="M6 1l10 12M16 1L6 13" stroke="#6d8590" strokeWidth="3" /></svg>
          </button>
        </TabTools>
      </TabBar>

      <Ribbon>
        <Group name="Clipboard" width={223} launcher gap={10}>
          <Big icon={<PasteIcon />} lines={['Paste']} width={64} />
          <Stack>
            <SmallButton><CutIcon /> Cut</SmallButton>
            <SmallButton><CopyIcon /> Copy</SmallButton>
            <SmallButton><PainterIcon /> Format Painter</SmallButton>
          </Stack>
        </Group>

        <Group name="Font" width={286} launcher>
          <ToolRows>
            <ToolRow>
              <SelectBox $width={139}>
                <select aria-label="Font"><option>Arial</option></select>
                <Caret />
              </SelectBox>
              <SelectBox $width={62}>
                <select aria-label="Font size"><option>10</option></select>
                <Caret />
              </SelectBox>
              <ToolBox>
                <Tool $width={31} $gap={0} aria-label="Grow font"><Glyph $size={24}>A</Glyph><SizeMark /></Tool>
                <Tool $width={31} $gap={0} aria-label="Shrink font"><Glyph $size={18}>A</Glyph><SizeMark down /></Tool>
              </ToolBox>
            </ToolRow>
            <ToolRow>
              <ToolBox>
                <Tool aria-label="Bold"><Glyph>B</Glyph></Tool>
                <Tool aria-label="Italic"><Glyph $italic>I</Glyph></Tool>
                <Tool $width={48} aria-label="Underline"><Glyph $under>U</Glyph> <Caret /></Tool>
              </ToolBox>
              <ToolBox>
                <Tool $width={48} aria-label="Borders"><BordersIcon /> <Caret /></Tool>
              </ToolBox>
              <ToolBox>
                <Tool $width={46} aria-label="Fill color"><FillColorIcon /> <Caret /></Tool>
                <Tool $width={48} aria-label="Font color">
                  <svg width="24" height="24" viewBox="0 0 24 24">
                    <text x="4" y="16" fontSize="22" fontWeight="700" fontFamily="Liberation Serif, serif" fill="#34549c">A</text>
                    <rect x="0" y="17" width="24" height="6" fill="#f00" />
                  </svg>
                  <Caret />
                </Tool>
              </ToolBox>
            </ToolRow>
          </ToolRows>
        </Group>

        <Group name="Alignment" width={366} pad={5} gap={6} launcher>
          <ToolRows>
            <ToolRow>
              <ToolBox>
                <Tool aria-label="Top align"><AlignIcon widths={[20, 16, 16]} top={1} /></Tool>
                <Tool aria-label="Middle align"><AlignIcon widths={[20, 16, 20]} top={5} /></Tool>
                <Tool $on aria-label="Bottom align"><AlignIcon widths={[20, 16, 20]} top={10} /></Tool>
              </ToolBox>
              <ToolBox>
                <Tool $width={46} aria-label="Orientation"><OrientationIcon /> <Caret /></Tool>
              </ToolBox>
              <span />
              <span />
            </ToolRow>
            <ToolRow>
              <ToolBox>
                <Tool aria-label="Align left"><AlignIcon widths={[20, 15, 20, 15, 20]} top={1} side="left" /></Tool>
                <Tool aria-label="Center"><AlignIcon widths={[20, 14, 20, 14, 20]} top={1} /></Tool>
                <Tool aria-label="Align right"><AlignIcon widths={[20, 15, 20, 15, 20]} top={1} side="right" /></Tool>
              </ToolBox>
              <ToolBox>
                <Tool aria-label="Decrease indent"><IndentIcon /></Tool>
                <Tool aria-label="Increase indent"><IndentIcon /></Tool>
              </ToolBox>
            </ToolRow>
          </ToolRows>
          <Divider />
          <Stack $top={8}>
            <SmallButton $tall><WrapIcon /> Wrap Text</SmallButton>
            <SmallButton $tall><MergeIcon /> Merge &amp; Center <Caret /></SmallButton>
          </Stack>
        </Group>

        <Group name="Number" width={198} pad={5} launcher>
          <ToolRows>
            <SelectBox $width={186}>
              <select aria-label="Number format"><option>General</option></select>
              <Caret />
            </SelectBox>
            <ToolRow>
              <ToolBox>
                <Tool $width={46} $gap={10} aria-label="Currency"><Glyph>$</Glyph> <Caret /></Tool>
                <Tool aria-label="Percent"><Glyph>%</Glyph></Tool>
                <Tool aria-label="Comma style"><Glyph>,</Glyph></Tool>
              </ToolBox>
              <ToolBox>
                <Tool $width={32} aria-label="Increase decimal"><DecimalIcon /></Tool>
                <Tool $width={32} aria-label="Decrease decimal"><DecimalIcon flip /></Tool>
              </ToolBox>
            </ToolRow>
          </ToolRows>
        </Group>

        <Group name="Styles" width={254} pad={4}>
          <Big icon={<ConditionalIcon />} lines={['Conditional', 'Formatting']} width={104} />
          <Big icon={<TableIcon />} lines={['Format', 'as Table']} width={76} />
          <Big icon={<CellStyleIcon />} lines={['Cell', 'Styles']} width={64} />
        </Group>

        <Group name="Cells" width={195}>
          <Big icon={<InsertIcon />} lines={['Insert']} width={60} />
          <Big icon={<DeleteIcon />} lines={['Delete']} width={62} />
          <Big icon={<FormatIcon />} lines={['Format']} width={60} />
        </Group>

        <Group name="Editing" width={257} pad={12} gap={6}>
          <Stack>
            <SmallButton><Glyph $size={22}>Σ</Glyph> <span>&nbsp;AutoSum</span> <Caret /></SmallButton>
            <SmallButton><FillIcon /> Fill <Caret /></SmallButton>
            <SmallButton><ClearIcon /> Clear <Caret /></SmallButton>
          </Stack>
          <Big icon={<SortIcon />} lines={['Sort &', 'Filter']} width={60} />
          <Big icon={<FindIcon />} lines={['Find &', 'Select']} width={58} />
        </Group>
      </Ribbon>

      <FormulaBar>
        <NameBox>
          <input aria-label="Name box" defaultValue="AF52" />
          <Caret color="#222" size={12} />
        </NameBox>
        <FxButton aria-label="Insert function">
          <svg width="12" height="14" viewBox="0 0 12 14"><path d="M2 3c6-2 8 3 6 8" stroke="#a9b8cc" strokeWidth="3" fill="none" /></svg>
          <Glyph $italic $size={18}>fx</Glyph>
        </FxButton>
        <FormulaInput aria-label="Formula" />
        <ExpandButton aria-label="Expand formula bar">
          <svg width="12" height="14" viewBox="0 0 12 14"><path d="M1 1l5 5 5-5M1 7l5 5 5-5" stroke="#222c3a" strokeWidth="3" fill="none" /></svg>
        </ExpandButton>
      </FormulaBar>

      <Workbook>
        <SheetArea>
          <Sheet>
            <colgroup>
              <col width="38" />
              {columns.map(([name, width]) => (
                <col key={name} width={width} />
              ))}
              <col />
            </colgroup>
            <thead>
              <tr>
                <Corner aria-label="Select all" />
                {columns.map(([name]) => (
                  <ColumnHead key={name} scope="col">{name}</ColumnHead>
                ))}
                <ColumnHead aria-hidden="true" />
              </tr>
            </thead>
            <tbody>
              {Array.from({ length: 51 }, (_, i) => i + 1).map((n) => (
                <tr key={n}>
                  <RowHead scope="row">{n}</RowHead>
                  {columns.map(([name]) => (
                    <SheetCell key={name} col={name} row={rows[n] || {}} />
                  ))}
                  <Cell />
                </tr>
              ))}
            </tbody>
          </Sheet>
        </SheetArea>
        <ScrollBar>
          <SplitHandle />
          <ScrollArrow aria-label="Scroll up"><svg width="12" height="7" viewBox="0 0 12 7"><path d="M6 0l6 7H0z" fill="#3e5c8c" /></svg></ScrollArrow>
          <Thumb><Grip /></Thumb>
        </ScrollBar>
      </Workbook>
    </Window>

    <Banner>And not just a programming language!</Banner>
  </Page>
);

export default App;
